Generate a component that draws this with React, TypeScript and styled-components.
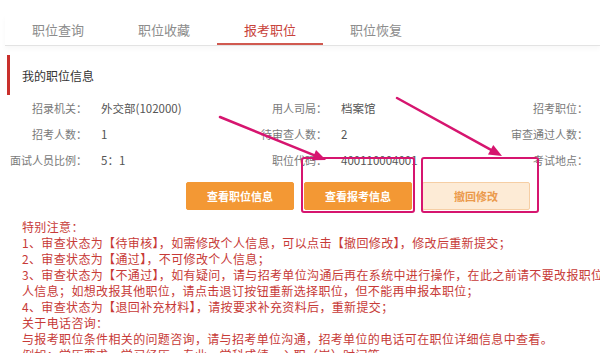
import React from 'react';
import styled, { createGlobalStyle } from 'styled-components';

const Global = createGlobalStyle`
  html, body { margin: 0; padding: 0; background: #fff; }
  body { font-family: "Noto Sans CJK SC", "Noto Sans", sans-serif; }
  * { box-sizing: border-box; }
`;

const Page = styled.div`
  position: relative;
  width: 600px;
  height: 353px;
  overflow: hidden;
  background: #fff;
  padding-top: 15px;
`;

const TabBar = styled.div`
  display: flex;
  margin-left: 5px;
  height: 31px;
  border-bottom: 1px solid #e3e3e3;
  box-shadow: 0 3px 5px rgba(0, 0, 0, 0.03);
`;

const Tab = styled.div<{ $active?: boolean }>`
  width: 106px;
  display: flex;
  align-items: center;
  justify-content: center;
  font-size: 13px;
  color: ${(p) => (p.$active ? '#c8423a' : '#8c8c8c')};
  border-bottom: 2px solid ${(p) => (p.$active ? '#d0594f' : 'transparent')};
`;

const SectionHeader = styled.div`
  margin-top: 9px;
  margin-left: 7px;
  height: 40px;
  border-left: 3px solid #c9302c;
  padding-left: 12px;
  display: flex;
  align-items: center;
  font-size: 12px;
  color: #333;
`;

const InfoRow = styled.div`
  display: grid;
  grid-template-columns: 87px 153px 87px 174px 87px 1fr;
  height: 26px;
  align-items: center;
  font-size: 11px;
  white-space: nowrap;
`;

const Label = styled.span`
  text-align: right;
  color: #7a7a7a;
`;

const Value = styled.span`
  padding-left: 14px;
  color: #555;
  font-size: 11.5px;
`;

const ButtonRow = styled.div`
  display: flex;
  gap: 10px;
  margin-top: 9px;
  padding-left: 186px;
`;

const ActionButton = styled.div<{ $ghost?: boolean }>`
  width: 108px;
  height: 28px;
  display: flex;
  align-items: center;
  justify-content: center;
  font-size: 11px;
  font-weight: 700;
  border-radius: 2px;
  background: ${(p) => (p.$ghost ? '#fdebd6' : '#f39834')};
  color: ${(p) => (p.$ghost ? '#eb9a4c' : '#fff')};
  border: 1px solid ${(p) => (p.$ghost ? '#f6cea4' : '#f39834')};
`;

const Notes = styled.div`
  margin-top: 9px;
  padding-left: 22px;
  width: 720px;
  color: #c73a37;
  font-size: 12px;
  letter-spacing: 0.35px;
  line-height: 16px;
  white-space: nowrap;
`;

const NoteLine = styled.p`
  margin: 0;
`;

const HighlightBox = styled.div<{ $x: number; $y: number; $w: number; $h: number }>`
  position: absolute;
  left: ${(p) => p.$x}px;
  top: ${(p) => p.$y}px;
  width: ${(p) => p.$w}px;
  height: ${(p) => p.$h}px;
  border: 2px solid #d6156f;
  border-radius: 3px;
  pointer-events: none;
`;

const Overlay = styled.svg`
  position: absolute;
  left: 0;
  top: 0;
  pointer-events: none;
`;

function Arrow({ x1, y1, x2, y2 }: { x1: number; y1: number; x2: number; y2: number }) {
  const dx = x2 - x1;
  const dy = y2 - y1;
  const len = Math.hypot(dx, dy);
  const ux = dx / len;
  const uy = dy / len;
  const hl = 13;
  const hw = 5.5;
  const bx = x2 - ux * hl;
  const by = y2 - uy * hl;
  const px = -uy * hw;
  const py = ux * hw;
  return (
    <g>
      <line x1={x1} y1={y1} x2={bx + ux * 2} y2={by + uy * 2} stroke="#d6156f" strokeWidth={2.5} strokeLinecap="round" />
      <polygon points={`${x2},${y2} ${bx + px},${by + py} ${bx - px},${by - py}`} fill="#d6156f" />
    </g>
  );
}

const rows: [string, string, string, string, string][] = [
  ['招录机关：', '外交部(102000)', '用人司局：', '档案馆', '招考职位：'],
  ['招考人数：', '1', '待审查人数：', '2', '审查通过人数：'],
  ['面试人员比例：', '5：1', '职位代码：', '400110004001', '考试地点：'],
];

export default function App() {
  return (
    <Page>
      <Global />
      <TabBar>
        <Tab>职位查询</Tab>
        <Tab>职位收藏</Tab>
        <Tab $active>报考职位</Tab>
        <Tab>职位恢复</Tab>
      </TabBar>
      <SectionHeader>我的职位信息</SectionHeader>
      {rows.map((r, i) => (
        <InfoRow key={i}>
          <Label>{r[0]}</Label>
          <Value>{r[1]}</Value>
          <Label>{r[2]}</Label>
          <Value>{r[3]}</Value>
          <Label>{r[4]}</Label>
          <Value />
        </InfoRow>
      ))}
      <ButtonRow>
        <ActionButton>查看职位信息</ActionButton>
        <ActionButton>查看报考信息</ActionButton>
        <ActionButton $ghost>撤回修改</ActionButton>
      </ButtonRow>
      <Notes>
        <NoteLine>特别注意：</NoteLine>
        <NoteLine>1、审查状态为【待审核】，如需修改个人信息，可以点击【撤回修改】，修改后重新提交；</NoteLine>
        <NoteLine>2、审查状态为【通过】，不可修改个人信息；</NoteLine>
        <NoteLine>
          3、审查状态为【不通过】，如有疑问，请与招考单位沟通后再在系统中进行操作，在此之前请不要改报职位或修改个
          <br />
          人信息；如想改报其他职位，请点击退订按钮重新选择职位，但不能再申报本职位；
        </NoteLine>
        <NoteLine>4、审查状态为【退回补充材料】，请按要求补充资料后，重新提交；</NoteLine>
        <NoteLine>关于电话咨询：</NoteLine>
        <NoteLine>与报考职位条件相关的问题咨询，请与招考单位沟通，招考单位的电话可在职位详细信息中查看。</NoteLine>
        <NoteLine>例如：学历要求、学习经历、专业、学科成绩、入职（岗）时间等</NoteLine>
      </Notes>
      <HighlightBox $x={301} $y={157} $w={114} $h={56} />
      <HighlightBox $x={421} $y={157} $w={118} $h={56} />
      <Overlay width={600} height={353} viewBox="0 0 600 353">
        <Arrow x1={220} y1={117} x2={326} y2={160} />
        <Arrow x1={397} y1={98} x2={502} y2={156} />
      </Overlay>
    </Page>
  );
}
